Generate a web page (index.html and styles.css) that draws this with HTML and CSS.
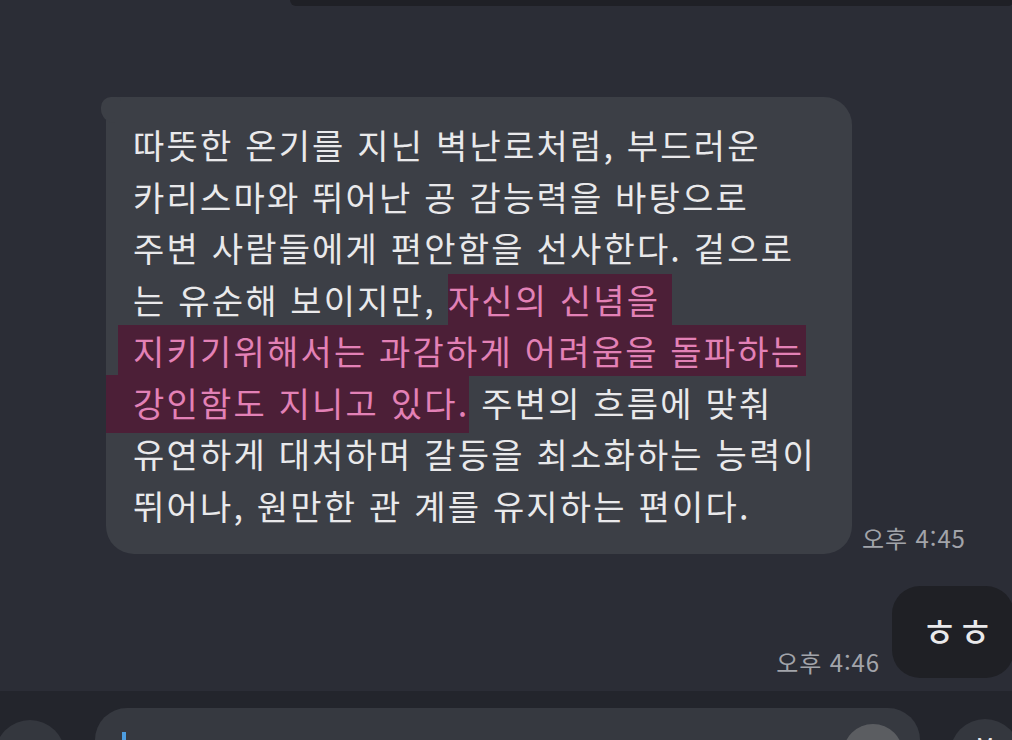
FILE: index.html
```html
<!DOCTYPE html>
<html lang="ko">
<head>
  <meta charset="UTF-8">
  <title>채팅</title>
  <link rel="stylesheet" href="styles.css">
</head>
<body>
  <div class="chat">
    <div class="prev-row">
      <div class="prev-bubble"></div>
    </div>

    <div class="msg-row">
      <div class="bubble">
        <div class="line">따뜻한 온기를 지닌 벽난로처럼, 부드러운</div>
        <div class="line">카리스마와 뛰어난 공 감능력을 바탕으로</div>
        <div class="line">주변 사람들에게 편안함을 선사한다. 겉으로</div>
        <div class="line">는 유순해 보이지만, <span class="mark">자신의 신념을&nbsp;</span></div>
        <div class="line"><span class="mark mark-wide">지키기위해서는 과감하게 어려움을 돌파하는</span></div>
        <div class="line"><span class="mark mark-edge">강인함도 지니고 있다.</span> 주변의 흐름에 맞춰</div>
        <div class="line">유연하게 대처하며 갈등을 최소화하는 능력이</div>
        <div class="line">뛰어나, 원만한 관 계를 유지하는 편이다.</div>
      </div>
      <span class="time">오후 4:45</span>
    </div>

    <div class="my-row">
      <span class="time">오후 4:46</span>
      <div class="my-bubble">ㅎㅎ</div>
    </div>
  </div>

  <div class="composer">
    <div class="round-btn left"><span class="btn-glyph">+</span></div>
    <div class="input">
      <span class="caret"></span>
      <span class="emoji-btn"></span>
    </div>
    <div class="round-btn right"><span class="btn-glyph">M</span></div>
  </div>
</body>
</html>
```

FILE: styles.css
```css
* { margin: 0; padding: 0; box-sizing: border-box; }
html, body {
  width: 1012px;
  height: 740px;
  overflow: hidden;
}
body {
  font-family: "Noto Sans CJK KR", "Noto Sans", sans-serif;
  background: #2b2d36;
  color: #e9e9eb;
}
.chat {
  height: 691px;
  overflow: hidden;
}

/* previous message, mostly scrolled away */
.prev-row {
  display: flex;
  height: 6px;
}
.prev-bubble {
  height: 6px;
  margin-left: auto;
  width: 724px;
  margin-right: -2px;
  background: #1f2026;
  border-radius: 0 0 22px 22px;
}

.msg-row {
  display: flex;
  align-items: flex-end;
  gap: 10px;
  margin-top: 91px;
}
.bubble {
  position: relative;
  margin-left: 106px;
  width: 746px;
  padding: 22px 0 23px 27px;
  background: #3c3f46;
  border-radius: 8px 28px 28px 28px;
  font-size: 34px;
  line-height: 51.5px;
  letter-spacing: 2.2px;
}
.bubble::before {
  content: "";
  position: absolute;
  left: -5px;
  top: 0;
  width: 20px;
  height: 26px;
  background: #3c3f46;
  border-radius: 10px 4px 0 14px;
}
.line {
  white-space: nowrap;
}
.mark {
  color: #e381b6;
  background: #4c1f37;
  padding: 1px 0;
}
.mark-wide {
  padding-left: 15px;
  margin-left: -15px;
  padding-right: 2px;
}
.mark-edge {
  padding: 3px 0 6px 27px;
  margin-left: -27px;
}
.time {
  font-size: 24px;
  color: #a2a4aa;
  line-height: 1;
  padding-bottom: 4px;
  letter-spacing: 0.9px;
  white-space: nowrap;
}

.my-row {
  display: flex;
  align-items: flex-end;
  justify-content: flex-end;
  gap: 12px;
  margin-top: 32px;
}
.my-bubble {
  width: 122px;
  height: 92px;
  margin-right: -2px;
  background: #1f2025;
  border-radius: 28px;
  font-size: 40px;
  line-height: 1;
  letter-spacing: -1px;
  display: flex;
  align-items: center;
  padding: 0 0 4px 29px;
}

.composer {
  height: 49px;
  background: #23252c;
  display: flex;
  align-items: flex-start;
  overflow: hidden;
  padding-top: 17px;
}
.round-btn {
  flex: none;
  width: 70px;
  height: 70px;
  border-radius: 50%;
  background: #34373e;
  margin-top: 12px;
  display: flex;
  justify-content: center;
  color: #e9e9eb;
}
.round-btn.left {
  margin-left: -5px;
}
.round-btn.right {
  margin-left: 30px;
  margin-top: 11px;
}
.btn-glyph {
  font-size: 22px;
  line-height: 1;
  padding-top: 14px;
}
.input {
  flex: none;
  position: relative;
  width: 825px;
  height: 70px;
  margin-left: 30px;
  background: #363940;
  border-radius: 32px;
  display: flex;
  align-items: flex-start;
  padding-left: 27px;
}
.caret {
  width: 4px;
  height: 30px;
  margin-top: 24px;
  background: #4d9de0;
}
.emoji-btn {
  position: absolute;
  right: 17px;
  top: 16px;
  width: 60px;
  height: 60px;
  border-radius: 50%;
  background: #5b5d61;
}
```
